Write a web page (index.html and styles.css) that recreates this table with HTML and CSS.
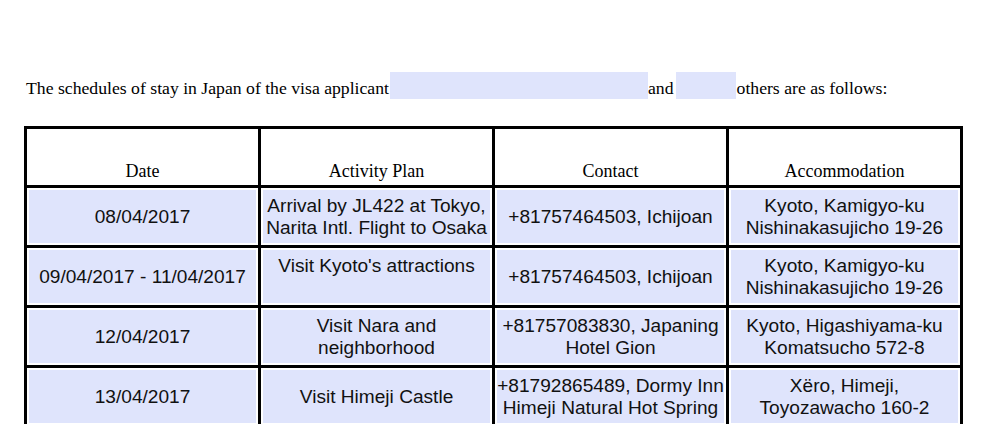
FILE: index.html
```html
<!DOCTYPE html>
<html>
<head>
<meta charset="utf-8">
<link rel="stylesheet" href="styles.css">
</head>
<body>
<div class="page">
  <div class="intro">
    <span class="txt">The schedules of stay in Japan of the visa applicant</span>
    <span class="field f1"></span>
    <span class="txt">and</span>
    <span class="field f2"></span>
    <span class="txt">others are as follows:</span>
  </div>
  <div class="table">
    <div class="hd">Date</div>
    <div class="hd">Activity Plan</div>
    <div class="hd">Contact</div>
    <div class="hd">Accommodation</div>

    <div class="cell"><div class="fill">08/04/2017</div></div>
    <div class="cell"><div class="fill">Arrival by JL422 at Tokyo,<br>Narita Intl. Flight to Osaka</div></div>
    <div class="cell"><div class="fill">+81757464503, Ichijoan</div></div>
    <div class="cell"><div class="fill">Kyoto, Kamigyo-ku<br>Nishinakasujicho 19-26</div></div>

    <div class="cell"><div class="fill">09/04/2017 - 11/04/2017</div></div>
    <div class="cell"><div class="fill top">Visit Kyoto's attractions</div></div>
    <div class="cell"><div class="fill">+81757464503, Ichijoan</div></div>
    <div class="cell"><div class="fill">Kyoto, Kamigyo-ku<br>Nishinakasujicho 19-26</div></div>

    <div class="cell"><div class="fill">12/04/2017</div></div>
    <div class="cell"><div class="fill">Visit Nara and<br>neighborhood</div></div>
    <div class="cell"><div class="fill">+81757083830, Japaning<br>Hotel Gion</div></div>
    <div class="cell"><div class="fill">Kyoto, Higashiyama-ku<br>Komatsucho 572-8</div></div>

    <div class="cell"><div class="fill">13/04/2017</div></div>
    <div class="cell"><div class="fill">Visit Himeji Castle</div></div>
    <div class="cell"><div class="fill">+81792865489, Dormy Inn<br>Himeji Natural Hot Spring</div></div>
    <div class="cell"><div class="fill">Xёro, Himeji,<br>Toyozawacho 160-2</div></div>
  </div>
</div>
</body>
</html>
```
FILE: styles.css
```css
html, body {
  margin: 0;
  padding: 0;
  background: #fff;
}
.page {
  padding: 72px 0 0 24px;
  width: 940px;
}
.intro {
  display: flex;
  align-items: center;
  height: 27px;
  padding-left: 2px;
  font-family: "Liberation Serif", "Times New Roman", serif;
  font-size: 17.7px;
  color: #000;
}
.txt {
  white-space: nowrap;
  padding-top: 5px;
}
.field {
  display: block;
  height: 27px;
  background: #dfe4fc;
}
.f1 {
  width: 258px;
  margin: 0 0 0 1px;
}
.f2 {
  width: 60px;
  margin: 0 1px 0 2px;
}
.table {
  margin-top: 27px;
  display: grid;
  grid-template-columns: repeat(4, 231px);
  grid-template-rows: 56px 57px 57px 57px 57px;
  gap: 3px;
  padding: 3px;
  background: #000;
  width: max-content;
}
.hd {
  background: #fff;
  display: flex;
  align-items: flex-end;
  justify-content: center;
  padding-bottom: 3px;
  font-family: "Liberation Serif", "Times New Roman", serif;
  font-size: 18px;
  color: #000;
}
.cell {
  background: #fff;
  padding: 2px;
  display: flex;
}
.fill {
  flex: 1;
  background: #dfe4fc;
  display: flex;
  align-items: center;
  justify-content: center;
  text-align: center;
  font-family: "Liberation Sans", Arial, sans-serif;
  font-size: 19.1px;
  line-height: 22px;
  color: #111;
  white-space: nowrap;
}
.fill.top {
  align-items: flex-start;
  padding-top: 5px;
}
```
